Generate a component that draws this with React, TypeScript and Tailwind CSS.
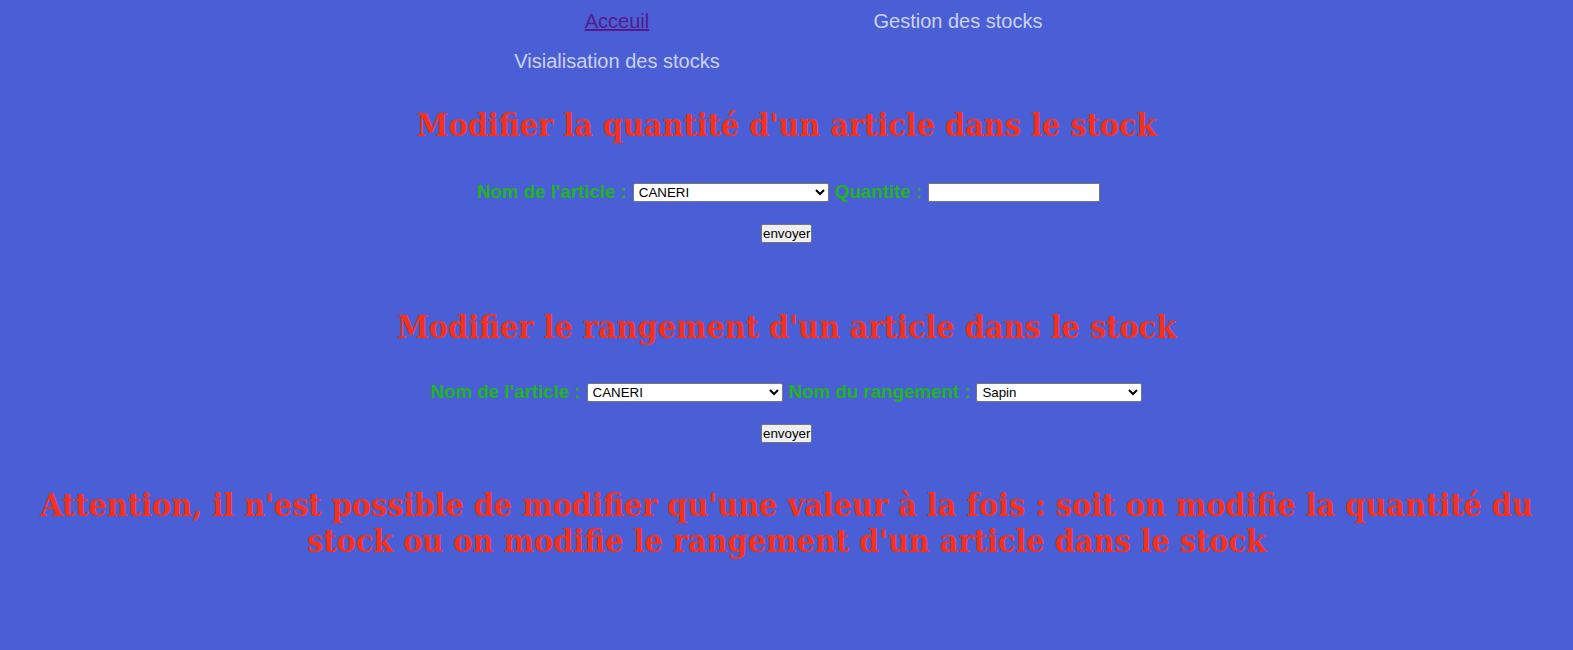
import React from "react";

const serif = { fontFamily: '"DejaVu Serif Condensed", "DejaVu Serif", serif', fontStretch: "condensed" as const };

export default function App() {
  const headingCls = "text-center font-bold text-[32px] leading-[36px] text-[#f4311c]";
  const labelCls = "text-[18.72px] font-bold text-[#22b422]";
  const selectCls =
    "bg-white text-black text-[13.33px] border border-[#767676] h-[19px] px-[1px] rounded-[2px]";
  const btnCls =
    "bg-[#efefef] text-black text-[13.33px] border border-[#767676] rounded-[2px] h-[19px] px-[1px] leading-[15px]";
  return (
    <div className="min-h-[650px] w-full bg-[#4a5fd6] font-['Liberation_Sans',Arial,sans-serif] pb-10">
      <nav className="mx-auto grid w-[684px] grid-cols-2 pt-[1px] pl-[2px] text-[20px]">
        <div className="flex h-[40px] items-center justify-center">
          <a href="#" className="text-[#551a8b] underline">
            Acceuil
          </a>
        </div>
        <div className="flex h-[40px] items-center justify-center">
          <a href="#" className="text-[#ccd2f4]">
            Gestion des stocks
          </a>
        </div>
        <div className="flex h-[40px] items-center justify-center">
          <a href="#" className="text-[#ccd2f4]">
            Visialisation des stocks
          </a>
        </div>
      </nav>

      <h1 className={headingCls + " mt-[26px]"} style={serif}>
        Modifier la quantité d'un article dans le stock
      </h1>

      <form className="mt-[35px] flex flex-col items-center">
        <div className="flex items-center gap-[6px] pl-[4px]">
          <span className={labelCls}>Nom de l'article :</span>
          <select className={selectCls + " w-[196px]"} defaultValue="CANERI">
            <option>CANERI</option>
          </select>
          <span className={labelCls}>Quantite :</span>
          <input type="text" className="h-[19px] w-[172px] border border-[#767676] bg-white" />
        </div>
        <button type="button" className={btnCls + " mt-[18px] w-[51px]"}>
          envoyer
        </button>
      </form>

      <h1 className={headingCls + " mt-[66px]"} style={serif}>
        Modifier le rangement d'un article dans le stock
      </h1>

      <form className="mt-[33px] flex flex-col items-center">
        <div className="flex items-center gap-[6px]">
          <span className={labelCls}>Nom de l'article :</span>
          <select className={selectCls + " w-[196px]"} defaultValue="CANERI">
            <option>CANERI</option>
          </select>
          <span className={labelCls}>Nom du rangement :</span>
          <select className={selectCls + " w-[166px]"} defaultValue="Sapin">
            <option>Sapin</option>
          </select>
        </div>
        <button type="button" className={btnCls + " mt-[18px] w-[51px]"}>
          envoyer
        </button>
      </form>

      <h1 className={headingCls + " mt-[44px] px-2"} style={serif}>
        Attention, il n'est possible de modifier qu'une valeur à la fois : soit on modifie la quantité du
        <br />
        stock ou on modifie le rangement d'un article dans le stock
      </h1>
    </div>
  );
}
